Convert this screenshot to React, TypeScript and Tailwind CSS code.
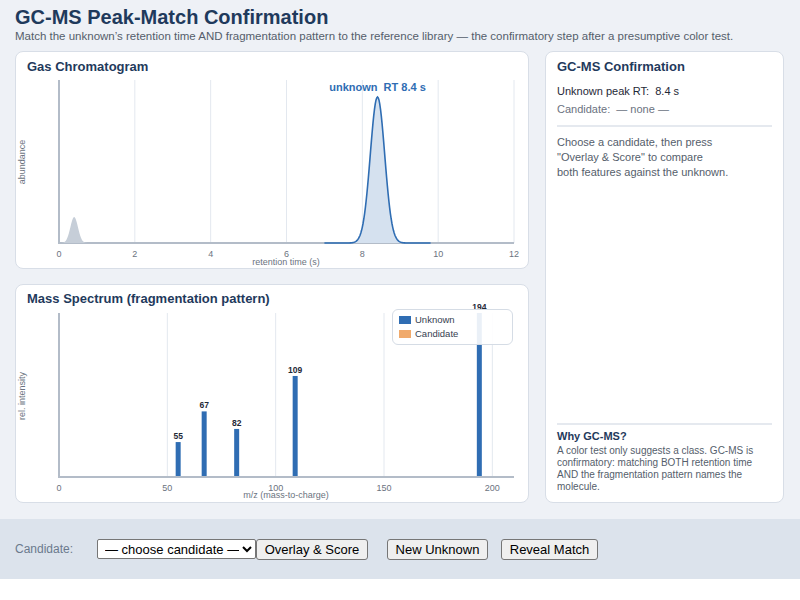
import React from "react";

const FONT = { fontFamily: '"Liberation Sans", Arial, Helvetica, sans-serif' };

const BLUE = "#2f6db3";

function gauss(t: number, mu: number, s: number) {
  return Math.exp(-((t - mu) ** 2) / (2 * s * s));
}

// chromatogram geometry (svg coords)
const GX0 = 43;
const GX1 = 498;
const GY0 = 168;
const gx = (t: number) => GX0 + (t * (GX1 - GX0)) / 12;

function peakPath(mu: number, s: number, h: number, t0: number, t1: number, close: boolean) {
  const pts: string[] = [];
  for (let t = t0; t <= t1 + 1e-9; t += 0.02) {
    const y = GY0 - h * gauss(t, mu, s);
    pts.push(`${gx(t).toFixed(2)},${y.toFixed(2)}`);
  }
  if (close) {
    return `M${gx(t0).toFixed(2)},${GY0} L${pts.join(" L")} L${gx(t1).toFixed(2)},${GY0} Z`;
  }
  return `M${pts.join(" L")}`;
}

function Chromatogram() {
  const ticks = [0, 2, 4, 6, 8, 10, 12];
  return (
    <svg width={512} height={194} viewBox="0 0 512 194" className="block overflow-visible">
      {ticks.slice(1).map((t) => (
        <line key={t} x1={gx(t)} y1={5} x2={gx(t)} y2={GY0} stroke="#e3e8ef" strokeWidth={1} />
      ))}
      <line x1={GX0} y1={5} x2={GX0} y2={GY0 + 1} stroke="#b3bcc8" strokeWidth={2} />
      <line x1={GX0} y1={GY0} x2={GX1} y2={GY0} stroke="#b3bcc8" strokeWidth={2} />
      {/* small solvent peak */}
      <path d={peakPath(0.4, 0.1, 26, 0, 1.0, true)} fill="#c6ced8" />
      {/* unknown peak */}
      <path d={peakPath(8.4, 0.19, 146, 7.0, 9.8, true)} fill="#d5e1ef" />
      <path d={peakPath(8.4, 0.19, 146, 7.0, 9.8, false)} fill="none" stroke={BLUE} strokeWidth={1.6} />
      {ticks.map((t) => (
        <text key={t} x={gx(t)} y={182} textAnchor="middle" fontSize={9} fill="#6b7380">
          {t}
        </text>
      ))}
      <text x={270} y={189.5} textAnchor="middle" fontSize={9} fill="#6b7380">
        retention time (s)
      </text>
      <text x={9} y={87} textAnchor="middle" fontSize={9} fill="#6b7380" transform="rotate(-90 9 87)">
        abundance
      </text>
      <text x={gx(8.4)} y={16} textAnchor="middle" fontSize={11} fontWeight={700} fill={BLUE} className="whitespace-pre">
        {"unknown  RT 8.4 s"}
      </text>
    </svg>
  );
}

// mass spectrum geometry
const MX0 = 43;
const MX1 = 498;
const MY0 = 170;
const mx = (m: number) => MX0 + (m * (MX1 - MX0)) / 210;
const MH = 164;

const peaks = [
  { mz: 55, i: 0.213 },
  { mz: 67, i: 0.4 },
  { mz: 82, i: 0.293 },
  { mz: 109, i: 0.616 },
  { mz: 194, i: 1.0 },
];

function MassSpectrum() {
  const ticks = [0, 50, 100, 150, 200];
  return (
    <svg width={512} height={196} viewBox="0 0 512 196" className="block overflow-visible">
      {ticks.slice(1).map((t) => (
        <line key={t} x1={mx(t)} y1={6} x2={mx(t)} y2={MY0} stroke="#e3e8ef" strokeWidth={1} />
      ))}
      {peaks.map((p) => {
        const h = p.i * MH;
        return (
          <g key={p.mz}>
            <rect x={mx(p.mz) - 2.5} y={MY0 - h} width={5} height={h} fill={BLUE} />
            <text x={mx(p.mz)} y={MY0 - h - 3} textAnchor="middle" fontSize={8.5} fontWeight={700} fill="#1f2937">
              {p.mz}
            </text>
          </g>
        );
      })}
      <line x1={MX0} y1={6} x2={MX0} y2={MY0 + 1} stroke="#b3bcc8" strokeWidth={2} />
      <line x1={MX0} y1={MY0} x2={MX1} y2={MY0} stroke="#b3bcc8" strokeWidth={2} />
      {ticks.map((t) => (
        <text key={t} x={mx(t)} y={184} textAnchor="middle" fontSize={9} fill="#6b7380">
          {t}
        </text>
      ))}
      <text x={270} y={190.5} textAnchor="middle" fontSize={9} fill="#6b7380">
        m/z (mass-to-charge)
      </text>
      <text x={9} y={89} textAnchor="middle" fontSize={9} fill="#6b7380" transform="rotate(-90 9 89)">
        rel. intensity
      </text>
    </svg>
  );
}

export default function App() {
  return (
    <div style={FONT} className="w-[800px] bg-[#eef1f6]">
      <div className="px-[15px] pt-[5px] pb-4">
        <h1 className="text-[20px] leading-[24px] font-bold text-[#1f3a5c]">GC-MS Peak-Match Confirmation</h1>
        <p className="text-[11.5px] leading-[15px] text-[#555e6b]">
          Match the unknown’s retention time AND fragmentation pattern to the reference library — the confirmatory step after a presumptive color test.
        </p>

        <div className="mt-[7px] flex gap-4">
          <div className="flex w-[514px] flex-col gap-[15px]">
            {/* Gas chromatogram */}
            <div className="h-[218px] rounded-lg border border-[#d8dee7] bg-white">
              <h2 className="px-[11px] pt-[7px] text-[13px] leading-[16px] font-bold text-[#1f3a5c]">Gas Chromatogram</h2>
              <Chromatogram />
            </div>

            {/* Mass spectrum */}
            <div className="relative h-[219px] rounded-lg border border-[#d8dee7] bg-white">
              <h2 className="px-[11px] pt-[6px] text-[13px] leading-[16px] font-bold text-[#1f3a5c]">
                Mass Spectrum (fragmentation pattern)
              </h2>
              <MassSpectrum />
              <div className="absolute left-[376px] top-[24px] w-[121px] rounded-md border border-[#d5dce5] bg-white/90 px-[6px] py-[3px] text-[9.5px] leading-[14px] text-[#374151]">
                <div className="flex items-center gap-[4px]">
                  <span className="h-[8px] w-[12px] bg-[#2f6db3]" />
                  Unknown
                </div>
                <div className="flex items-center gap-[4px]">
                  <span className="h-[8px] w-[12px] bg-[#f0aa6c]" />
                  Candidate
                </div>
              </div>
            </div>
          </div>

          {/* Confirmation panel */}
          <div className="flex h-[452px] w-[239px] flex-col rounded-lg border border-[#d8dee7] bg-white px-[11px] pt-[7px] pb-[9px]">
            <h2 className="text-[13px] leading-[16px] font-bold text-[#1f3a5c]">GC-MS Confirmation</h2>
            <div className="mt-[7px] text-[11px] leading-[18px] text-[#1f2937] whitespace-pre">{"Unknown peak RT:  8.4 s"}</div>
            <div className="text-[11px] leading-[18px] text-[#6b7280] whitespace-pre">{"Candidate:  — none —"}</div>
            <div className="mt-[7px] border-t-2 border-[#e5e9ef]" />
            <p className="mt-[8px] text-[11px] leading-[15px] text-[#555e6b]">
              Choose a candidate, then press
              <br />
              "Overlay &amp; Score" to compare
              <br />
              both features against the unknown.
            </p>
            <div className="flex-1" />
            <div className="border-t-2 border-[#e5e9ef] pt-[4px]">
              <div className="text-[11px] leading-[14px] font-bold text-[#1f3a5c]">Why GC-MS?</div>
              <p className="mt-[2px] text-[10px] leading-[12px] text-[#555e6b]">
                A color test only suggests a class. GC-MS is confirmatory: matching BOTH retention time AND the fragmentation pattern names the molecule.
              </p>
            </div>
          </div>
        </div>
      </div>

      {/* Controls */}
      <div className="flex h-[60px] items-center bg-[#dce3ec] px-[15px]">
        <span className="w-[82px] text-[12px] text-[#6b7a8c]">Candidate:</span>
        <select className="h-[20px] w-[159px] rounded-[2px] border border-[#767676] bg-white pl-[3px] text-[13px] text-black">
          <option>— choose candidate —</option>
          <option>Candidate A</option>
          <option>Candidate B</option>
        </select>
        <button className="h-[21px] w-[112px] rounded-[3px] border border-[#767676] bg-[#efefef] text-[13px] text-black">
          Overlay &amp; Score
        </button>
        <button className="ml-[19px] h-[21px] w-[101px] rounded-[3px] border border-[#767676] bg-[#efefef] text-[13px] text-black">
          New Unknown
        </button>
        <button className="ml-[13px] h-[21px] w-[97px] rounded-[3px] border border-[#767676] bg-[#efefef] text-[13px] text-black">
          Reveal Match
        </button>
      </div>
    </div>
  );
}
